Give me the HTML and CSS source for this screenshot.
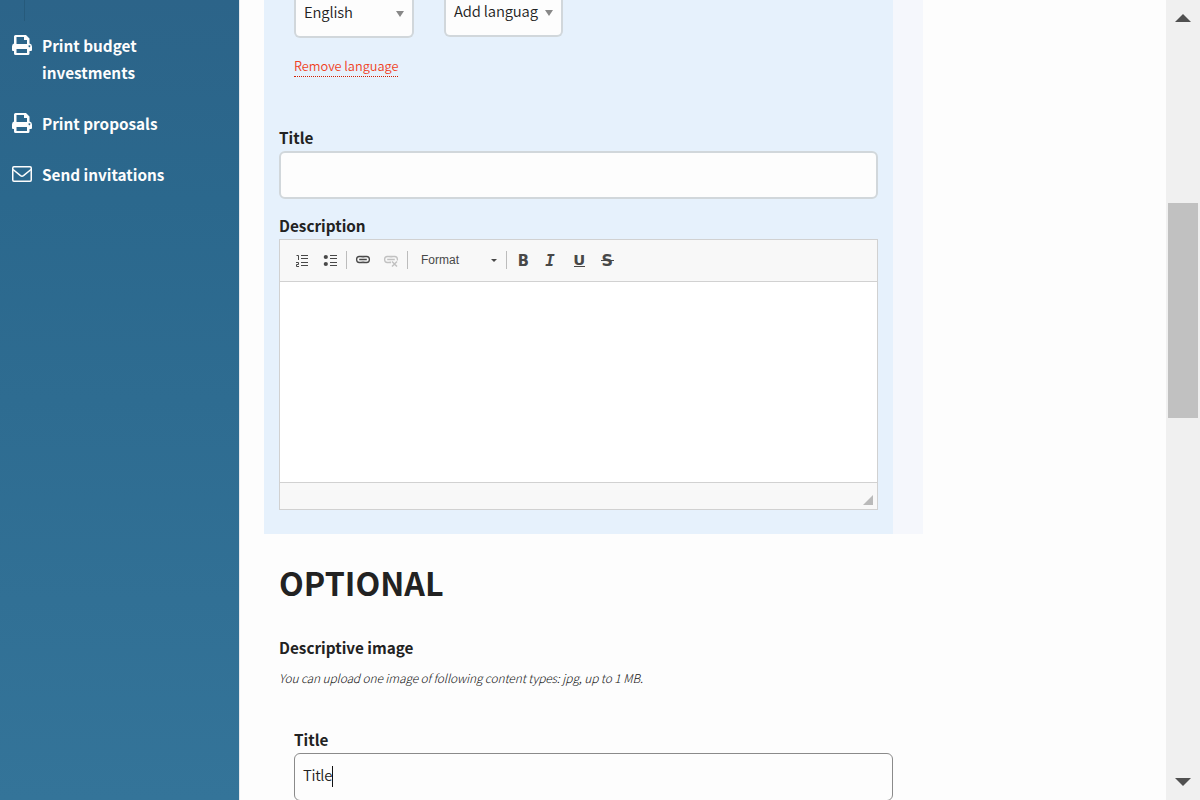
FILE: index.html
```
<!DOCTYPE html>
<html lang="en">
<head>
<meta charset="utf-8">
<title>Administration</title>
<link rel="stylesheet" href="styles.css">
</head>
<body>
<svg class="defs" width="0" height="0">
  <symbol id="print" viewBox="0 0 20 20"><path fill="currentColor" fill-rule="evenodd" d="M2 8.500V1.500Q2 0 3.500 0H14L17.500 3.500V8.500Q20 9 20 11.500V15Q20 16 19 16H17.500V18.500Q17.500 20 16 20H3.500Q2 20 2 18.500V16H1Q0 16 0 15V11.500Q0 9 2 8.500ZM4.500 2V9H15V5H12V2ZM4.500 14V18H15V14ZM17.400 10.300a.9.900 0 1 0 .01 0Z"/></symbol>
</svg>
<div class="page">
  <nav class="sidebar">
    <div class="branch"></div>
    <a class="nav-item"><svg class="nav-icon" width="20" height="20"><use href="#print"/></svg><span>Print budget<br>investments</span></a>
    <a class="nav-item"><svg class="nav-icon" width="20" height="20"><use href="#print"/></svg><span>Print proposals</span></a>
    <a class="nav-item"><svg class="nav-icon mail" width="20" height="16" viewBox="0 0 20 16" fill="none" stroke="currentColor" stroke-width="1.500"><rect x=".75" y=".75" width="18.500" height="14.500" rx="1.200"/><path d="M1 3.500L8.500 9.600Q10 10.700 11.500 9.600L19 3.500"/></svg><span>Send invitations</span></a>
  </nav>
  <main class="content">
    <section class="translations">
      <div class="panel">
        <div class="languages">
          <div class="select">English<span class="arrow"></span></div>
          <div class="select add"><span class="clip">Add languag</span><span class="arrow"></span></div>
        </div>
        <a class="remove">Remove language</a>
        <label class="label">Title</label>
        <div class="input"></div>
        <label class="label description">Description</label>
        <div class="editor">
          <div class="toolbar">
            <svg width="357" height="41" viewBox="280 240 357 41" fill="none" stroke="#484848" stroke-width="1.500">
              <path d="M301 255.500H308M301 258.500H308M301 262.500H308M301 265.500H308M330 255.500H337M330 258.500H337M330 262.500H337M330 265.500H337" stroke-width="1"/>
              <path d="M296.500 255.500H298.500V260M296 262.500H298.500V264.500H296.500V266.500H299" stroke-width="1"/>
              <circle cx="325.800" cy="257" r="2.100" fill="#484848" stroke="none"/><circle cx="325.800" cy="264" r="2.100" fill="#484848" stroke="none"/>
              <path d="M346.500 251V269M407.500 251V269M506.500 251V269" stroke="#bcbcbc" stroke-width="1"/>
              <g stroke-width="1.300"><path d="M362.300 257.500V256.500H359.300Q356.600 256.500 356.600 259.500T359.300 262.500H362.300V261.500M363.700 257.500V256.500H366.700Q369.400 256.500 369.400 259.500T366.700 262.500H363.700V261.500"/><path d="M359.200 259.500H366.800" stroke-width="1.500"/></g>
              <g stroke="#c1c1c1" stroke-width="1.300"><path d="M390.300 257.500V256.500H387.300Q384.600 256.500 384.600 259.500T387.300 262.500H390.300V261.500M391.700 257.500V256.500H394.700Q397.400 256.500 397.400 259.500V260.500M387.200 259.500H394.800"/><path d="M392 261.500L397 266.500M397 261.500L392 266.500" stroke-width="1.500"/></g>
              <path d="M491 259H497L494 262Z" fill="#484848" stroke="none"/>
              <g fill="#484848" stroke="none" font-family="DejaVu Sans, sans-serif" font-weight="bold" font-size="15.500">
                <text x="517.700" y="265.500" textLength="11.200" lengthAdjust="spacingAndGlyphs">B</text>
                <text x="545.300" y="265.500" font-family="DejaVu Sans Mono, monospace" font-style="italic" textLength="9.500" lengthAdjust="spacingAndGlyphs">I</text>
                <text x="573.300" y="264.500" font-size="14.500" textLength="12" lengthAdjust="spacingAndGlyphs">U</text>
                <text x="601.500" y="265.500" textLength="11.500" lengthAdjust="spacingAndGlyphs">S</text>
              </g>
              <path d="M574 266.500H585M601 260.500H614" stroke-width="1"/>
              <text x="421" y="264" fill="#484848" stroke="none" font-family="Liberation Sans, sans-serif" font-size="12">Format</text>
            </svg>
          </div>
          <div class="editable"></div>
          <div class="statusbar"><span class="resizer"></span></div>
        </div>
      </div>
    </section>
    <section class="optional">
      <h2>OPTIONAL</h2>
      <label class="label image-label">Descriptive image</label>
      <p class="help">You can upload one image of following content types: jpg, up to 1 MB.</p>
      <div class="nested">
        <label class="label">Title</label>
        <div class="input focused"><span class="typed">Title</span><span class="caret"></span></div>
      </div>
    </section>
  </main>
  <aside class="scrollbar">
    <span class="up"></span><span class="thumb"></span><span class="down"></span>
  </aside>
</div>
</body>
</html>
```
FILE: styles.css
```
* { box-sizing: border-box; }
body { margin: 0; overflow: hidden; background: #fdfdfd; color: #222; font: 15.3px/27px "Noto Sans CJK JP", "Noto Sans", sans-serif; }
.defs { display: none; }
.page { display: flex; width: 1200px; height: 800px; overflow: hidden; }
.sidebar { width: 240px; flex: none; border-right: 1px solid #e6e9ec; background: linear-gradient(#2c6489, #2b688d 25%, #347499); background-clip: padding-box; color: #fdfdfd; font-weight: 700; }
.branch { width: 1px; height: 21px; margin: 0 0 11px 24px; background: #265a7b; }
.nav-item { display: flex; gap: 10px; padding-left: 12px; margin-bottom: 24px; }
.nav-icon { flex: none; margin-top: 3px; }
.mail { margin-top: 5px; }
.content { width: 926px; flex: none; padding-left: 24px; }
.translations { width: 659px; height: 534px; background: #f5f7fc; }
.panel { width: 629px; height: 534px; padding: 0 15px; background: #e6f1fc; }
.languages { display: flex; gap: 30px; padding-left: 15px; height: 38px; align-items: flex-start; }
.select { display: flex; align-items: flex-start; justify-content: space-between; width: 120px; height: 38px; padding: 0 8px; border: 2px solid #d1d7db; border-top: 0; border-radius: 0 0 6px 6px; background: #fdfdfd; font-size: 14.8px; line-height: 23px; font-weight: 350; letter-spacing: -.15px; }
.add { width: 119px; height: 37px; line-height: 21px; }
.clip { white-space: nowrap; }
.arrow { width: 8px; height: 6px; margin-top: 11px; background: #888; clip-path: polygon(0 0, 100% 0, 50% 100%); }
.add .arrow { margin-top: 10px; }
.remove { display: block; width: 104px; height: 20px; margin: 19px 0 47px 15px; border-bottom: 1px dotted #d22000; color: #f04124; font-size: 12.8px; line-height: 17px; font-weight: 350; letter-spacing: -.05px; white-space: nowrap; }
.label { display: block; height: 27px; line-height: 27px; font-weight: 700; }
.input { width: 599px; height: 48px; border: 2px solid #d1d7db; border-radius: 6px; background: #fdfdfd; }
.description { margin-top: 13px; }
.editor { width: 599px; border: 1px solid #d1d1d1; background: #fff; }
.toolbar { height: 42px; border-bottom: 1px solid #d1d1d1; background: #f8f8f8; }
.toolbar svg { display: block; }
.editable { height: 200px; }
.statusbar { display: flex; justify-content: flex-end; align-items: flex-end; height: 27px; padding: 0 4px 4px; border-top: 1px solid #d1d1d1; background: #f8f8f8; }
.resizer { width: 10px; height: 10px; background: #bababa; clip-path: polygon(100% 0, 100% 100%, 0 100%); }
.optional { padding: 23px 15px 0; }
h2 { margin: 0; height: 50px; font-size: 32.2px; line-height: 50px; font-weight: 700; }
.image-label { margin-top: 27px; }
.help { margin: 4px 0 0; height: 26px; color: #111; font-size: 11.9px; line-height: 26px; font-style: italic; font-weight: 300; letter-spacing: -.08px; white-space: nowrap; }
.nested { padding: 35px 0 0 15px; }
.focused { display: flex; padding: 12px 8px 0; border: 1px solid #8a8a8a; font-size: 14.8px; line-height: 18px; font-weight: 350; letter-spacing: -.3px; }
.caret { width: 1px; height: 21px; background: #111; }
.scrollbar { display: flex; flex-direction: column; width: 34px; padding-left: 2px; background: #f0f0f0; }
.up { width: 16px; height: 8px; margin: 14px 0 181px 7px; background: #505050; clip-path: polygon(50% 0, 100% 100%, 0 100%); }
.thumb { width: 30px; height: 215px; background: #c1c1c1; }
.down { width: 16px; height: 8px; margin: 360px 0 0 7px; background: #505050; clip-path: polygon(0 0, 100% 0, 50% 100%); }
```
